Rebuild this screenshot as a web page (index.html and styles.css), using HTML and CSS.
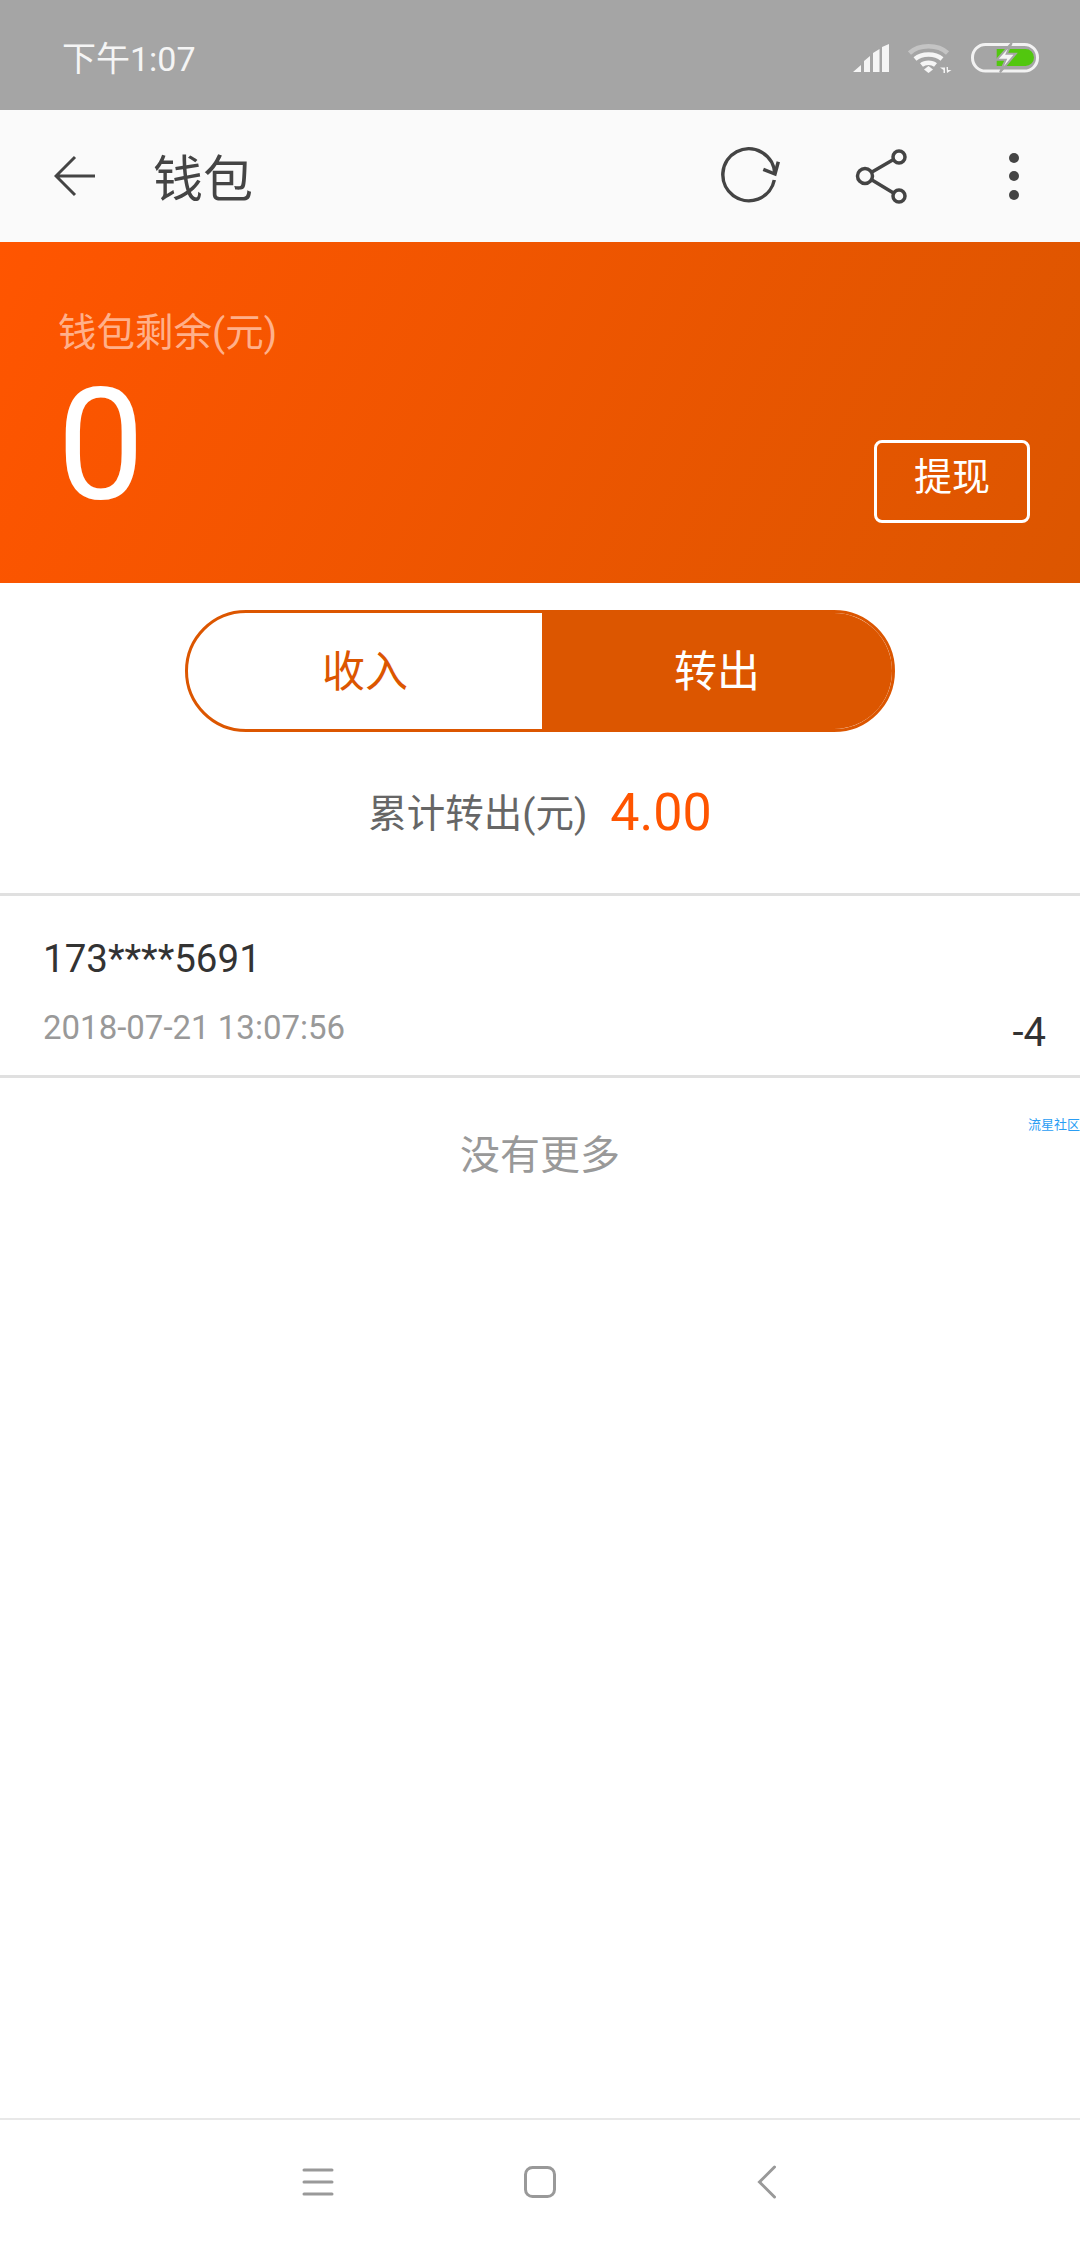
FILE: index.html
```html
<!DOCTYPE html>
<html lang="zh-CN">
<head>
    <meta charset="UTF-8">
    <meta name="viewport" content="width=device-width, initial-scale=1.0">
    <title>钱包</title>
    <link rel="stylesheet" href="styles.css">
</head>
<body>
    <div class="status-bar">
        <span class="status-time">下午1:07</span>
        <div class="status-icons">
            <svg class="icon-signal" width="36" height="28" viewBox="0 0 36 28">
                <path d="M0 28L8 21V28ZM11 28V17L17 12V28ZM20 28V9L26.5 5V28ZM29 28V3L36 0V28Z" fill="#f5f5f5"/>
            </svg>
            <svg class="icon-wifi" width="44" height="30" viewBox="0 0 44 30">
                <path d="M1.5 10C11 1 30 1 39.5 10" fill="none" stroke="#c4c4c4" stroke-width="4.500"/>
                <path d="M7 16C14 10 27 10 34 16" fill="none" stroke="#f5f5f5" stroke-width="4.500"/>
                <path d="M13.500 22C17 19 24 19 27.500 22" fill="none" stroke="#f5f5f5" stroke-width="4.500"/>
                <path d="M16 26.500L20.500 23L25 26.500L20.500 30Z" fill="#f5f5f5"/>
                <path d="M32 24.500H37V30H35.500V27ZM38.500 24H40V27H43.500L39 30Z" fill="#f5f5f5"/>
            </svg>
            <svg class="icon-battery" width="68" height="30" viewBox="0 0 68 30">
                <rect x="1.500" y="1.500" width="65" height="26.500" rx="13" fill="none" stroke="#f2f2f2" stroke-width="3"/>
                <path d="M25.700 6H54.500A8.500 8.500 0 0 1 54.500 23H25.700Z" fill="#52c70f"/>
                <path d="M40.700 0L25.700 16.700H34.700L29 29.300L44.700 10.700H35.700Z" fill="#f5f5f5" stroke="#a5a5a5" stroke-width="2"/>
            </svg>
        </div>
    </div>

    <div class="toolbar">
        <svg class="icon-back" width="42" height="42" viewBox="0 0 42 42">
            <path d="M41 21H2M21 2L2 21L21 40" fill="none" stroke="#444" stroke-width="3"/>
        </svg>
        <h1 class="toolbar-title">钱包</h1>
        <div class="toolbar-actions">
            <svg width="60" height="60" viewBox="0 0 60 60">
                <path d="M54.300 34A26 26 0 1 1 54.800 27.500" fill="none" stroke="#444" stroke-width="3.500"/>
                <path d="M43.300 23.300L55 28L58.300 15.700" fill="none" stroke="#444" stroke-width="3.500"/>
            </svg>
            <svg width="60" height="60" viewBox="0 0 60 60">
                <circle cx="15" cy="30" r="7.500" fill="none" stroke="#444" stroke-width="3.500"/>
                <circle cx="49" cy="11" r="6" fill="none" stroke="#444" stroke-width="3.500"/>
                <circle cx="49" cy="50" r="6" fill="none" stroke="#444" stroke-width="3.500"/>
                <path d="M22 26L43.500 13.500M22 34L43.500 47" fill="none" stroke="#444" stroke-width="3.500"/>
            </svg>
            <svg class="action-more" width="60" height="60" viewBox="0 0 60 60">
                <circle cx="30" cy="12" r="5" fill="#444"/>
                <circle cx="30" cy="30" r="5" fill="#444"/>
                <circle cx="30" cy="49" r="5" fill="#444"/>
            </svg>
        </div>
    </div>

    <div class="hero">
        <div class="hero-balance">
            <div class="hero-label">钱包剩余(元)</div>
            <div class="hero-amount">0</div>
        </div>
        <div class="btn-withdraw">提现</div>
    </div>

    <div class="segment">
        <div class="segment-item segment-income">收入</div>
        <div class="segment-item segment-active">转出</div>
    </div>

    <div class="total-row">
        <span class="total-label">累计转出(元)</span>
        <span class="total-value">4.00</span>
    </div>

    <div class="record">
        <div class="record-info">
            <div class="record-phone">173****5691</div>
            <div class="record-date">2018-07-21 13:07:56</div>
        </div>
        <div class="record-amount">-4</div>
    </div>

    <div class="no-more">
        没有更多
        <span class="watermark">流星社区</span>
    </div>

    <div class="spacer"></div>

    <div class="nav-bar">
        <div class="nav-item">
            <svg width="32" height="30" viewBox="0 0 32 30">
                <path d="M2 3H30M2 15H30M2 27H30" fill="none" stroke="#999" stroke-width="3" stroke-linecap="round"/>
            </svg>
        </div>
        <div class="nav-item">
            <svg width="32" height="32" viewBox="0 0 32 32">
                <rect x="1.500" y="1.500" width="29" height="29" rx="7" fill="none" stroke="#999" stroke-width="3"/>
            </svg>
        </div>
        <div class="nav-item nav-back">
            <svg width="20" height="34" viewBox="0 0 20 34">
                <path d="M17.500 2L2.500 17L17.500 32" fill="none" stroke="#999" stroke-width="3" stroke-linecap="round"/>
            </svg>
        </div>
    </div>
</body>
</html>
```

FILE: styles.css
```css
html, body {
    height: 100%;
}

body {
    margin: 0;
    display: flex;
    flex-direction: column;
    min-height: 2248px;
    background: #fff;
    font-family: Roboto, "Noto Sans CJK SC", sans-serif;
    color: #333;
}

.status-bar {
    display: flex;
    align-items: center;
    justify-content: space-between;
    height: 110px;
    padding: 0 41px 0 62px;
    background: #a5a5a5;
    box-sizing: border-box;
}

.status-time {
    font-size: 34px;
    line-height: 40px;
    color: #f5f5f5;
    margin-top: 7px;
}

.status-icons {
    display: flex;
    align-items: center;
    gap: 19px;
    margin-top: 6px;
}

.toolbar {
    display: flex;
    align-items: center;
    height: 132px;
    padding: 0 36px 0 54px;
    background: #fafafa;
    box-sizing: border-box;
}

.toolbar-title {
    margin: -2px 0 0 57px;
    font-size: 50px;
    font-weight: 400;
    color: #444;
}

.toolbar-actions {
    display: flex;
    align-items: center;
    gap: 70px;
    margin-left: auto;
}

.action-more {
    margin-left: 4px;
}

.hero {
    display: flex;
    justify-content: space-between;
    height: 341px;
    padding: 69px 50px 60px 58px;
    background: linear-gradient(115deg, #ff5500 0%, #dc5600 100%);
    box-sizing: border-box;
}

.hero-label {
    font-size: 38.5px;
    line-height: 44px;
    color: #ffb08a;
}

.hero-amount {
    margin: 30px 0 0 -1px;
    font-size: 156px;
    line-height: 120px;
    color: #fff;
}

.btn-withdraw {
    align-self: flex-end;
    width: 156px;
    height: 83px;
    border: 3px solid #fff;
    border-radius: 8px;
    box-sizing: border-box;
    font-size: 38px;
    line-height: 68px;
    text-align: center;
    color: #fff;
}

.segment {
    display: flex;
    width: 710px;
    height: 122px;
    margin: 27px 0 0 185px;
    border: 3px solid #dc5600;
    border-radius: 61px;
    box-sizing: border-box;
    overflow: hidden;
}

.segment-item {
    display: flex;
    align-items: center;
    justify-content: center;
    padding-bottom: 6px;
    box-sizing: border-box;
    font-size: 43px;
}

.segment-income {
    width: 354px;
    color: #dc5600;
}

.segment-active {
    flex: 1;
    background: #dc5600;
    color: #fff;
}

.total-row {
    display: flex;
    align-items: center;
    justify-content: center;
    gap: 23px;
    height: 161px;
    border-bottom: 3px solid #e0e0e0;
}

.total-label {
    margin-bottom: 6px;
    font-size: 38.5px;
    color: #666;
}

.total-value {
    font-size: 52px;
    color: #ff5500;
}

.record {
    display: flex;
    align-items: flex-end;
    justify-content: space-between;
    height: 179px;
    padding: 0 34px 0 43px;
    border-bottom: 3px solid #e0e0e0;
}

.record-info {
    margin-bottom: 27px;
}

.record-phone {
    font-size: 38.500px;
    line-height: 48px;
    color: #333;
}

.record-date {
    margin-top: 25px;
    font-size: 33px;
    line-height: 40px;
    color: #999;
}

.record-amount {
    margin-bottom: 18px;
    font-size: 40px;
    line-height: 48px;
    color: #333;
}

.no-more {
    position: relative;
    height: 156px;
    font-size: 40px;
    line-height: 156px;
    text-align: center;
    color: #999;
}

.watermark {
    position: absolute;
    top: 39px;
    right: 0;
    font-size: 13px;
    line-height: 16px;
    color: #2a9df4;
}

.spacer {
    flex: 1;
}

.nav-bar {
    display: flex;
    justify-content: center;
    align-items: center;
    height: 130px;
    border-top: 2px solid #e8e8e8;
    box-sizing: border-box;
    padding-bottom: 4px;
}

.nav-item {
    display: flex;
    justify-content: center;
    width: 222px;
}

.nav-back {
    padding-left: 10px;
    box-sizing: border-box;
}
```
